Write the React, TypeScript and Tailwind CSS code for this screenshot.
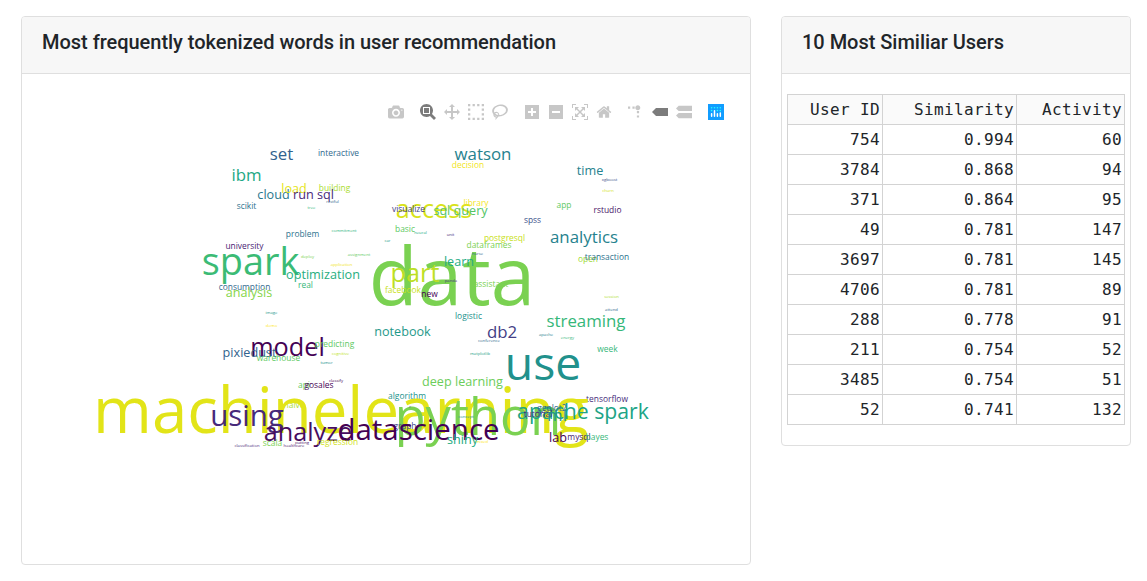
import React from "react";

type Word = [text: string, x: number, y: number, weight: number, color: string];

const UNIT = 4.21;

const words: Word[] = [
  ["tree", 311.5, 209, 1, "#35b779"],
  ["commitment", 344, 232, 1, "#2fb47c"],
  ["assignment", 359, 256, 1, "#5ec962"],
  ["deploy", 307.5, 258, 1, "#7ad151"],
  ["application", 341.5, 266, 1, "#f1e51d"],
  ["image", 271.5, 314, 1, "#1f988b"],
  ["demo", 271.5, 327, 1, "#fde725"],
  ["cognitive", 340.5, 355, 1, "#bddf26"],
  ["tumor", 326.5, 364, 1, "#21918c"],
  ["neural", 420.5, 234, 1, "#25ab82"],
  ["unit", 450.5, 236, 1, "#46327e"],
  ["car", 387.5, 242, 1, "#1f9e89"],
  ["xgboost", 609.5, 181, 1, "#3b528b"],
  ["churn", 608, 192, 1, "#d2e21b"],
  ["session", 611.5, 298, 1, "#addc30"],
  ["attend", 611.5, 311, 1, "#31688e"],
  ["apache", 546, 336, 1, "#26828e"],
  ["energy", 567.5, 339, 1, "#35b779"],
  ["conference", 489, 342, 1, "#31688e"],
  ["matplotlib", 480, 355, 1, "#1fa187"],
  ["classification", 247, 447, 1, "#482878"],
  ["classify", 336, 382, 1, "#440154"],
  ["interactive", 338.5, 156, 2, "#31688e"],
  ["building", 334.5, 191, 2, "#aadc32"],
  ["scikit", 246.5, 209, 2, "#2c728e"],
  ["problem", 302.5, 237, 2, "#2c728e"],
  ["university", 244.5, 249, 2, "#482173"],
  ["decision", 468, 168, 2, "#f1e51d"],
  ["spss", 532.5, 223, 2, "#3b528b"],
  ["basic", 405, 232, 2, "#5ec962"],
  ["postgresql", 504.5, 241, 2, "#c8e020"],
  ["dataframes", 489, 248, 2, "#7ad151"],
  ["app", 564, 208, 2, "#5ec962"],
  ["rstudio", 607.5, 213, 2, "#481467"],
  ["open", 588, 262, 2, "#a0da39"],
  ["transaction", 607, 260, 2, "#2c728e"],
  ["week", 607.5, 352, 2, "#35b779"],
  ["logistic", 468.5, 319, 2, "#21918c"],
  ["real", 305.5, 288, 2, "#35b779"],
  ["consumption", 244.5, 290, 2, "#31688e"],
  ["algorithm", 407, 399, 2, "#21918c"],
  ["tensorflow", 607, 402, 2, "#472d7b"],
  ["api", 304, 388, 2, "#5ec962"],
  ["gosales", 319, 388, 2, "#440154"],
  ["naive", 294, 408, 2, "#addc30"],
  ["assistant", 491, 287, 2, "#7ad151"],
  ["set", 281.5, 160, 4, "#31628d"],
  ["ibm", 246.5, 181, 4, "#22a884"],
  ["cloud", 273.5, 199, 3, "#2a788e"],
  ["load", 294, 193, 3, "#e5e419"],
  ["run sql", 313.5, 199, 3, "#482878"],
  ["restful", 332.5, 203, 1, "#31688e"],
  ["watson", 483, 160, 4, "#26828e"],
  ["time", 590, 175, 3, "#26828e"],
  ["access", 434, 218, 6, "#d8e219"],
  ["library", 476, 206, 2, "#f4e61e"],
  ["sql query", 460.5, 215, 3, "#54c568"],
  ["visualize", 408.5, 212, 2, "#433e85"],
  ["analytics", 584, 243, 4, "#26828e"],
  ["spark", 250.5, 275, 9, "#3bbb75"],
  ["optimization", 323, 279, 3, "#28ae80"],
  ["analysis", 249, 297, 3, "#86d549"],
  ["data", 452, 305, 19, "#7ad151"],
  ["learn", 459, 266, 3, "#25ac82"],
  ["part", 415, 282, 6, "#bddf26"],
  ["facebook", 403, 293, 2, "#c8e020"],
  ["new", 429.5, 297, 2, "#440154"],
  ["panda", 451, 282, 1, "#46327e"],
  ["nurse", 477.5, 255, 1, "#31688e"],
  ["notebook", 402.5, 336, 3, "#1f998a"],
  ["db2", 502, 338, 4, "#433e85"],
  ["streaming", 586, 327, 4, "#35b779"],
  ["use", 543, 380, 11, "#21918c"],
  ["model", 287.5, 356, 6, "#440154"],
  ["pixiedust", 249.5, 357, 3, "#31628d"],
  ["predicting", 334.5, 347, 2, "#5ec962"],
  ["warehouse", 278.5, 361, 2, "#5ec962"],
  ["deep learning", 462.5, 386, 3, "#6ccd5a"],
  ["machinelearning", 341, 433, 15.1, "#e2e418"],
  ["python", 478, 435, 12, "#7ad151"],
  ["using", 247, 426, 7, "#472a7a"],
  ["analyze", 308, 441, 6, "#470d60"],
  ["graph", 405, 429, 2, "#414487"],
  ["datascience", 418.5, 439.5, 7, "#440154"],
  ["scala", 272.5, 446, 2, "#7ad151"],
  ["healthcare", 294, 447, 1, "#481467"],
  ["putting", 302, 444, 1, "#481467"],
  ["regression", 337.5, 445, 2, "#d2e21b"],
  ["shiny", 462.5, 444, 3, "#25ab82"],
  ["concept", 466, 418, 1, "#21918c"],
  ["mixed", 482, 443, 1, "#fde725"],
  ["r", 410, 408, 1, "#46327e"],
  ["apache spark", 583, 419, 5.04, "#20a486"],
  ["ggplot2", 552, 411, 2, "#31688e"],
  ["tutorial", 538, 417, 2, "#482173"],
  ["ml", 557, 421, 4, "#1f968b"],
  ["lab", 558, 442, 3, "#440154"],
  ["mysql", 579, 440, 2, "#481a6c"],
  ["bayes", 597, 440, 2, "#35b779"],
];

const icons = {
  camera: { w: 1000, d: "m500 450c-83 0-150-67-150-150 0-83 67-150 150-150 83 0 150 67 150 150 0 83-67 150-150 150z m400 150h-120c-16 0-34 13-39 29l-31 93c-6 15-23 28-40 28h-340c-16 0-34-13-39-28l-31-94c-6-15-23-28-40-28h-120c-55 0-100-45-100-100v-450c0-55 45-100 100-100h800c55 0 100 45 100 100v450c0 55-45 100-100 100z m-400-550c-138 0-250 112-250 250 0 138 112 250 250 250 138 0 250-112 250-250 0-138-112-250-250-250z m365 380c-19 0-35 16-35 35 0 19 16 35 35 35 19 0 35-16 35-35 0-19-16-35-35-35z" },
  zoom: { w: 1000, d: "m1000-25l-250 251c40 63 63 138 63 218 0 224-182 406-407 406-224 0-406-182-406-406s183-406 407-406c80 0 155 22 218 62l250-250 125 125z m-812 250l0 438 437 0 0-438-437 0z m62 375l313 0 0-312-313 0 0 312z" },
  pan: { w: 1000, d: "m1000 350l-187 188 0-125-250 0 0 250 125 0-188 187-187-187 125 0 0-250-250 0 0 125-188-188 186-187 0 125 252 0 0-250-125 0 187-188 188 188-125 0 0 250 250 0 0-126 187 188z" },
  box: { w: 1000, d: "m0 850l0-143 143 0 0 143-143 0z m286 0l0-143 143 0 0 143-143 0z m285 0l0-143 143 0 0 143-143 0z m286 0l0-143 143 0 0 143-143 0z m-857-286l0-143 143 0 0 143-143 0z m857 0l0-143 143 0 0 143-143 0z m-857-285l0-143 143 0 0 143-143 0z m857 0l0-143 143 0 0 143-143 0z m-857-286l0-143 143 0 0 143-143 0z m286 0l0-143 143 0 0 143-143 0z m285 0l0-143 143 0 0 143-143 0z m286 0l0-143 143 0 0 143-143 0z" },
  lasso: { w: 1031, d: "m1018 538c-36 207-290 336-568 286-277-48-473-256-436-463 10-57 36-108 76-151-13-66 11-137 68-183 34-28 75-41 114-42l-55-70 0 0c-2-1-3-2-4-3-10-14-8-34 5-45 14-11 34-8 45 4 1 1 2 3 2 5l0 0 113 140c16 11 31 24 45 40 4 3 6 7 8 11 48-3 100 0 151 9 278 48 473 255 436 462z m-624-379c-80 14-149 48-197 96 42 42 109 47 156 9 33-26 47-66 41-105z m-187-74c-19 16-33 37-39 60 50-32 109-55 174-68-42-25-95-24-135 8z m360 75c-34-7-69-9-102-8 8 62-16 128-68 170-73 59-175 54-244-5-9 20-16 40-20 61-28 159 121 317 333 354s407-60 434-217c28-159-121-318-333-355z" },
  plus: { w: 875, d: "m1 787l0-875 875 0 0 875-875 0z m687-500l-187 0 0-187-125 0 0 187-188 0 0 125 188 0 0 187 125 0 0-187 187 0 0-125z" },
  minus: { w: 875, d: "m0 788l0-876 875 0 0 876-875 0z m688-500l-500 0 0 125 500 0 0-125z" },
  autoscale: { w: 1000, d: "m250 850l-187 0-63 0 0-62 0-188 63 0 0 188 187 0 0 62z m688 0l-188 0 0-62 188 0 0-188 62 0 0 188 0 62-62 0z m-875-938l0 188-63 0 0-188 0-62 63 0 187 0 0 62-187 0z m875 188l0-188-188 0 0-62 188 0 62 0 0 62 0 188-62 0z m-125 188l-1 0-93-94-156 156 156 156 92-93 2 0 0 250-250 0 0-2 93-92-156-156-156 156 94 92 0 2-250 0 0-250 0 0 93 93 157-156-157-156-93 94 0 0 0-250 250 0 0 0-94 93 156 157 156-157-93-93 0 0 250 0 0 250z" },
  home: { w: 928.6, d: "m786 296v-267q0-15-11-26t-25-10h-214v214h-143v-214h-214q-15 0-25 10t-11 26v267q0 1 0 2t0 2l321 264 321-264q1-1 1-4z m124 39l-34-41q-5-5-12-6h-2q-7 0-12 3l-386 322-386-322q-7-4-13-4-7 2-12 7l-35 41q-4 5-3 13t6 12l401 334q18 15 42 15t43-15l136-114v109q0 8 5 13t13 5h107q8 0 13-5t5-13v-227l122-102q5-5 6-12t-4-13z" },
  spike: { w: 1000, t: "matrix(1.5 0 0 -1.5 0 850)", d: "M512 409c0-57-46-104-103-104-57 0-104 47-104 104 0 57 47 103 104 103 57 0 103-46 103-103z m-327-39l92 0 0 92-92 0z m-185 0l92 0 0 92-92 0z m370-186l92 0 0 93-92 0z m0-184l92 0 0 92-92 0z" },
  closest: { w: 1500, d: "m375 725l0 0-375-375 375-374 0-1 1125 0 0 750-1125 0z" },
  compare: { w: 1125, d: "m187 786l0 2-187-188 188-187 0 0 937 0 0 373-938 0z m0-499l0 1-187-188 188-188 0 0 937 0 0 376-938-1z" },
} as Record<string, { w: number; d: string; t?: string }>;

const groups = [
  ["camera"],
  ["zoom", "pan", "box", "lasso"],
  ["plus", "minus", "autoscale", "home"],
  ["spike", "closest", "compare"],
];
const active = ["zoom", "closest"];

function ModeBar() {
  return (
    <div className="flex h-4 justify-end gap-4 pr-[26px]">
      {groups.map((group) => (
        <div key={group[0]} className="flex gap-2">
          {group.map((name) => (
            <svg
              key={name}
              viewBox={`0 0 ${icons[name].w} 1000`}
              className={active.includes(name) ? "size-4 fill-[#444444]/70" : "size-4 fill-[#444444]/30"}
            >
              <path d={icons[name].d} transform={icons[name].t ?? "matrix(1 0 0 -1 0 850)"} />
            </svg>
          ))}
        </div>
      ))}
      <svg viewBox="0 0 16 16" className="size-4">
        <rect width="16" height="16" fill="#119dff" />
        <g fill="#25fefd">
          <circle cx="3.6" cy="3.7" r=".8" />
          <circle cx="6.5" cy="3.7" r=".8" />
          <circle cx="9.4" cy="3.7" r=".8" />
          <circle cx="12.3" cy="3.7" r=".8" />
          <circle cx="3.6" cy="6.6" r=".8" />
          <circle cx="9.4" cy="6.6" r=".8" />
          <circle cx="12.3" cy="6.6" r=".8" />
        </g>
        <g stroke="#fff" strokeWidth="1.5" strokeLinecap="round">
          <path d="M3.6 9.7v2.6M6.5 6.8v5.5M9.4 9.7v2.6M12.3 9v3.3" />
        </g>
      </svg>
    </div>
  );
}

function WordCloud() {
  return (
    <svg viewBox="22 130 728 400" className="mt-2.5 block h-[400px] w-[728px] font-['Open_Sans',verdana,arial,sans-serif]">
      {words.map(([text, x, y, weight, color]) => (
        <text key={`${text}-${x}`} x={x} y={y} fontSize={weight * UNIT} fill={color} textAnchor="middle">
          {text}
        </text>
      ))}
    </svg>
  );
}

const rows = [
  ["754", "0.994", "60"],
  ["3784", "0.868", "94"],
  ["371", "0.864", "95"],
  ["49", "0.781", "147"],
  ["3697", "0.781", "145"],
  ["4706", "0.781", "89"],
  ["288", "0.778", "91"],
  ["211", "0.754", "52"],
  ["3485", "0.754", "51"],
  ["52", "0.741", "132"],
];

function Card({ title, className, children }: { title: string; className: string; children: React.ReactNode }) {
  return (
    <section className={`overflow-hidden rounded border border-[#dfdfdf] bg-white ${className}`}>
      <header className="h-[57px] border-b border-[#dfdfdf] bg-[#f7f7f7] px-5 pt-[13px]">
        <h5 className="text-xl leading-6 font-medium tracking-[-0.025px]">{title}</h5>
      </header>
      {children}
    </section>
  );
}

export default function App() {
  return (
    <main className="flex h-[581px] items-start gap-[30px] overflow-hidden bg-white pt-4 pl-[21px] font-[Roboto,sans-serif] text-[#212529]">
      <Card title="Most frequently tokenized words in user recommendation" className="h-[549px] w-[730px]">
        <div className="pt-[30px]">
          <ModeBar />
          <WordCloud />
        </div>
      </Card>
      <Card title="10 Most Similiar Users" className="h-[430px] w-[350px]">
        <div className="px-[5px] pt-5">
          <table className="w-[338px] table-fixed border-collapse text-right font-['DejaVu_Sans_Mono',monospace] text-base leading-[29px] tracking-[0.367px]">
            <colgroup>
              <col className="w-[95px]" />
              <col className="w-[134px]" />
              <col className="w-[108px]" />
            </colgroup>
            <thead>
              <tr className="h-[30px] bg-[#fafafa]">
                {["User ID", "Similarity", "Activity"].map((h) => (
                  <th key={h} className="border border-[#d3d3d3] p-0 pr-0.5 font-normal">{h}</th>
                ))}
              </tr>
            </thead>
            <tbody>
              {rows.map((row) => (
                <tr key={row[0]} className="h-[30px]">
                  {row.map((cell, i) => (
                    <td key={i} className="border border-[#d3d3d3] p-0 pr-0.5">{cell}</td>
                  ))}
                </tr>
              ))}
            </tbody>
          </table>
        </div>
      </Card>
    </main>
  );
}
